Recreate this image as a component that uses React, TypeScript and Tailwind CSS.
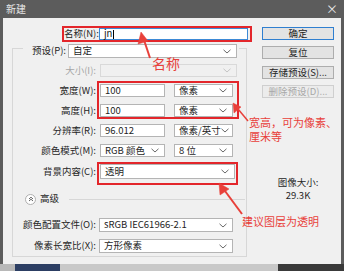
import React from "react";

const FONT = { fontFamily: '"Noto Sans CJK SC", "Noto Sans", sans-serif' };

function Chevron({ color = "#5a5a5a" }: { color?: string }) {
  return (
    <svg width="8" height="5" viewBox="0 0 8 5" className="shrink-0">
      <path d="M0.5 0.8 L4 4 L7.5 0.8" fill="none" stroke={color} strokeWidth="1" />
    </svg>
  );
}

function Select({ text, w, h = "h-[13px]", disabled = false }: { text: string; w: string; h?: string; disabled?: boolean }) {
  return (
    <div
      className={`${w} ${h} border ${disabled ? "border-[#d9d9d9] bg-[#f0f0f0]" : "border-[#b4b4b4] bg-white"} flex items-center justify-between pl-[4px] pr-[5px] overflow-hidden`}
    >
      <span className="text-[9.5px] leading-none text-[#1e1e1e] whitespace-nowrap">{text}</span>
      <Chevron color={disabled ? "#c4c4c4" : "#6a6a6a"} />
    </div>
  );
}

function Input({ text, w }: { text: string; w: string }) {
  return (
    <div className={`${w} h-[13px] border border-[#b4b4b4] bg-white flex items-center pl-[4px]`}>
      <span className="text-[9.5px] leading-none text-[#1e1e1e] whitespace-nowrap">{text}</span>
    </div>
  );
}

function Label({ text, gray = false }: { text: string; gray?: boolean }) {
  return (
    <div className={`w-[83px] text-right text-[9.5px] leading-none whitespace-nowrap ${gray ? "text-[#a6a6a6]" : "text-[#262626]"}`}>{text}</div>
  );
}

function Btn({ text, primary = false, disabled = false }: { text: string; primary?: boolean; disabled?: boolean }) {
  return (
    <div
      className={`h-[13px] w-[72px] flex items-center justify-center border ${primary ? "border-[#2f7fd0]" : disabled ? "border-[#cfcfcf]" : "border-[#adadad]"} ${disabled ? "bg-[#ececec]" : "bg-[#e3e3e3]"}`}
    >
      <span className={`text-[9.5px] leading-none whitespace-nowrap ${disabled ? "text-[#a8a8a8]" : "text-[#1e1e1e]"}`}>{text}</span>
    </div>
  );
}

export default function App() {
  return (
    <div className="relative w-[344px] h-[271px] overflow-hidden bg-[#5c5c5c]" style={FONT}>
      {/* title bar */}
      <div className="h-[18px] flex items-center justify-between pl-[6px] pr-[6px] bg-[#5c5c5c]">
        <span className="text-[10px] leading-none text-[#e8e8e8]">新建</span>
        <span className="text-[12px] leading-none text-[#e8e8e8]">×</span>
      </div>

      {/* body */}
      <div className="h-[246px] mx-[3px] bg-[#f0f0f0] flex">
        {/* left */}
        <div className="w-[250px] flex flex-col">
          {/* name row */}
          <div className="mt-[8px] ml-[59px] w-[190px] h-[16px] border-2 border-[#e3262b] flex items-center">
            <div className="w-[32px] text-right text-[9.5px] leading-none text-[#262626] whitespace-nowrap">名称(N):</div>
            <div className="ml-[3px] flex-1 mr-[2px] h-[12px] border border-[#3d8ad6] bg-white flex items-center pl-[4px]">
              <span className="text-[9.5px] leading-none text-[#111]">jn</span>
              <span className="ml-[1px] w-[1px] h-[9px] bg-black" />
            </div>
          </div>

          {/* group box */}
          <div className="mt-[6px] ml-[9px] w-[235px] h-[209px] border border-[#d7d7d7] flex flex-col">
            {/* preset row (legend) */}
            <div className="-mt-[5px] ml-[10px] w-[216px] h-[14px] bg-[#f0f0f0] flex items-center">
              <div className="w-[43px] text-right text-[9.5px] leading-none text-[#262626] whitespace-nowrap">预设(P):</div>
              <div className="ml-[2px]">
                <Select text="自定" w="w-[169px]" h="h-[14px]" />
              </div>
            </div>

            <div className="mt-[6px] flex items-center">
              <Label text="大小(I):" gray />
              <div className="ml-[4px]">
                <Select text="" w="w-[137px]" disabled />
              </div>
            </div>

            <div className="mt-[7px] flex items-center">
              <Label text="宽度(W):" />
              <div className="ml-[4px] flex gap-[9px]">
                <Input text="100" w="w-[65px]" />
                <Select text="像素" w="w-[59px]" />
              </div>
            </div>

            <div className="mt-[7px] flex items-center">
              <Label text="高度(H):" />
              <div className="ml-[4px] flex gap-[9px]">
                <Input text="100" w="w-[65px]" />
                <Select text="像素" w="w-[59px]" />
              </div>
            </div>

            <div className="mt-[7px] flex items-center">
              <Label text="分辨率(R):" />
              <div className="ml-[4px] flex gap-[9px]">
                <Input text="96.012" w="w-[65px]" />
                <Select text="像素/英寸" w="w-[59px]" />
              </div>
            </div>

            <div className="mt-[7px] flex items-center">
              <Label text="颜色模式(M):" />
              <div className="ml-[4px] flex gap-[9px]">
                <Select text="RGB 颜色" w="w-[65px]" />
                <Select text="8 位" w="w-[59px]" />
              </div>
            </div>

            <div className="mt-[7px] flex items-center">
              <Label text="背景内容(C):" />
              <div className="ml-[4px]">
                <Select text="透明" w="w-[135px]" h="h-[15px]" />
              </div>
            </div>

            {/* advanced */}
            <div className="mt-[14px] flex items-center h-[12px]">
              <div className="ml-[12px] w-[11px] h-[11px] rounded-full border border-[#b0b0b0] bg-white flex items-center justify-center">
                <svg width="6" height="6" viewBox="0 0 6 6">
                  <path d="M1 3 L3 1.2 L5 3 M1 5 L3 3.2 L5 5" fill="none" stroke="#555" strokeWidth="0.9" />
                </svg>
              </div>
              <span className="ml-[4px] text-[9.5px] leading-none text-[#262626] whitespace-nowrap">高级</span>
              <div className="ml-[10px] flex-1 mr-[1px] h-[1px] bg-[#d7d7d7]" />
            </div>

            <div className="mt-[13px] flex items-center">
              <Label text="颜色配置文件(O):" />
              <div className="ml-[3px]">
                <Select text="sRGB IEC61966-2.1" w="w-[134px]" h="h-[14px]" />
              </div>
            </div>

            <div className="mt-[7px] flex items-center">
              <Label text="像素长宽比(X):" />
              <div className="ml-[3px]">
                <Select text="方形像素" w="w-[134px]" h="h-[14px]" />
              </div>
            </div>
          </div>
        </div>

        {/* right column */}
        <div className="ml-[9px] pt-[9px] w-[72px] flex flex-col">
          <Btn text="确定" primary />
          <div className="mt-[6px]">
            <Btn text="复位" />
          </div>
          <div className="mt-[7px]">
            <Btn text="存储预设(S)..." />
          </div>
          <div className="mt-[6px]">
            <Btn text="删除预设(D)..." disabled />
          </div>
          <div className="mt-[80px] flex flex-col items-center">
            <span className="text-[9.5px] leading-none text-[#262626] whitespace-nowrap">图像大小:</span>
            <span className="mt-[3px] text-[9.5px] leading-none text-[#262626] whitespace-nowrap">29.3K</span>
          </div>
        </div>
      </div>

      {/* bottom strip */}
      <div className="h-[7px] flex">
        <div className="w-[15px] bg-[#b8b8b8]" />
        <div className="w-[45px] bg-[#2c3e63]" />
        <div className="w-[218px] bg-[#c8c8c8]" />
        <div className="flex-1 bg-[#3a3a3a]" />
      </div>

      {/* annotation overlays */}
      <div className="absolute left-[97px] top-[81px] w-[142px] h-[38px] border-2 border-[#e3262b]" />
      <div className="absolute left-[97px] top-[162px] w-[141px] h-[23px] border-2 border-[#e3262b]" />

      <svg className="absolute left-0 top-0" width="344" height="271" viewBox="0 0 344 271">
        <g fill="#e8403a" stroke="#e8403a">
          <line x1="150" y1="58" x2="144" y2="40" strokeWidth="2" />
          <polygon points="141,32 138,44 148,41" strokeWidth="0.5" />
          <line x1="248" y1="121" x2="238" y2="109" strokeWidth="1.5" />
          <polygon points="233,103 234,113 241,107" strokeWidth="0.5" />
          <line x1="242" y1="214" x2="225" y2="191" strokeWidth="2" />
          <polygon points="219,183 220,195 229,189" strokeWidth="0.5" />
        </g>
      </svg>

      <div className="absolute left-[152px] top-[56px] text-[14px] leading-none text-[#e8403a] whitespace-nowrap">名称</div>
      <div className="absolute left-[249px] top-[115px] text-[11px] leading-[14px] text-[#e8403a] whitespace-nowrap">
        <div>宽高，可为像素、</div>
        <div>厘米等</div>
      </div>
      <div className="absolute left-[242px] top-[216px] text-[11px] leading-none text-[#e8403a] whitespace-nowrap">建议图层为透明</div>
    </div>
  );
}
